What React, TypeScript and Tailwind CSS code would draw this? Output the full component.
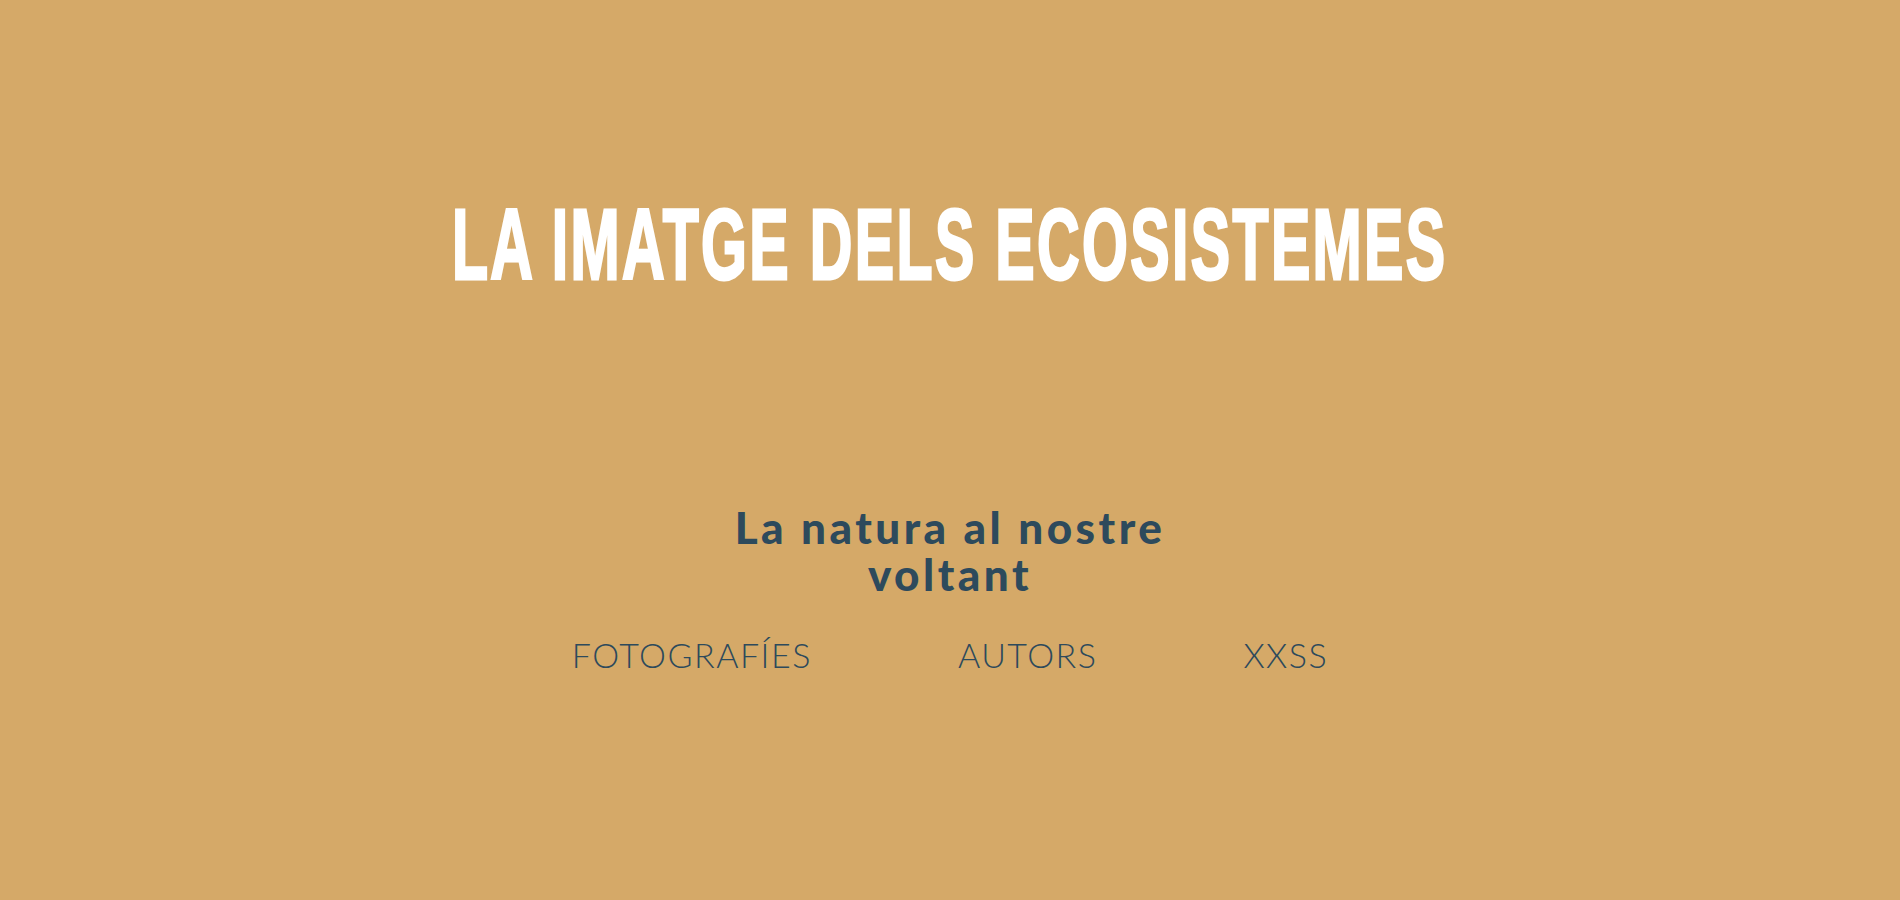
export default function App() {
  return (
    <div className="w-full h-[900px] bg-[#d5a968] flex flex-col items-center overflow-hidden">
      <h1 className="mt-[194px] text-white text-[100px] leading-[100px] font-bold whitespace-nowrap tracking-[4px] scale-x-[0.59] font-['Liberation_Sans_Narrow','Liberation_Sans',sans-serif] [-webkit-text-stroke:3px_white]">
        LA IMATGE DELS ECOSISTEMES
      </h1>
      <h2 className="mt-[210px] text-[#2d4a5c] text-[44px] leading-[47px] font-black tracking-[3.5px] text-center w-[520px] font-['Lato','Liberation_Sans',sans-serif]">
        La natura al nostre voltant
      </h2>
      <nav className="mt-[31px] flex gap-[146px] text-[#2d4a5c] text-[34px] font-light tracking-[1.5px] font-['Lato','Liberation_Sans',sans-serif]">
        <a>FOTOGRAFÍES</a>
        <a>AUTORS</a>
        <a>XXSS</a>
      </nav>
    </div>
  );
}
